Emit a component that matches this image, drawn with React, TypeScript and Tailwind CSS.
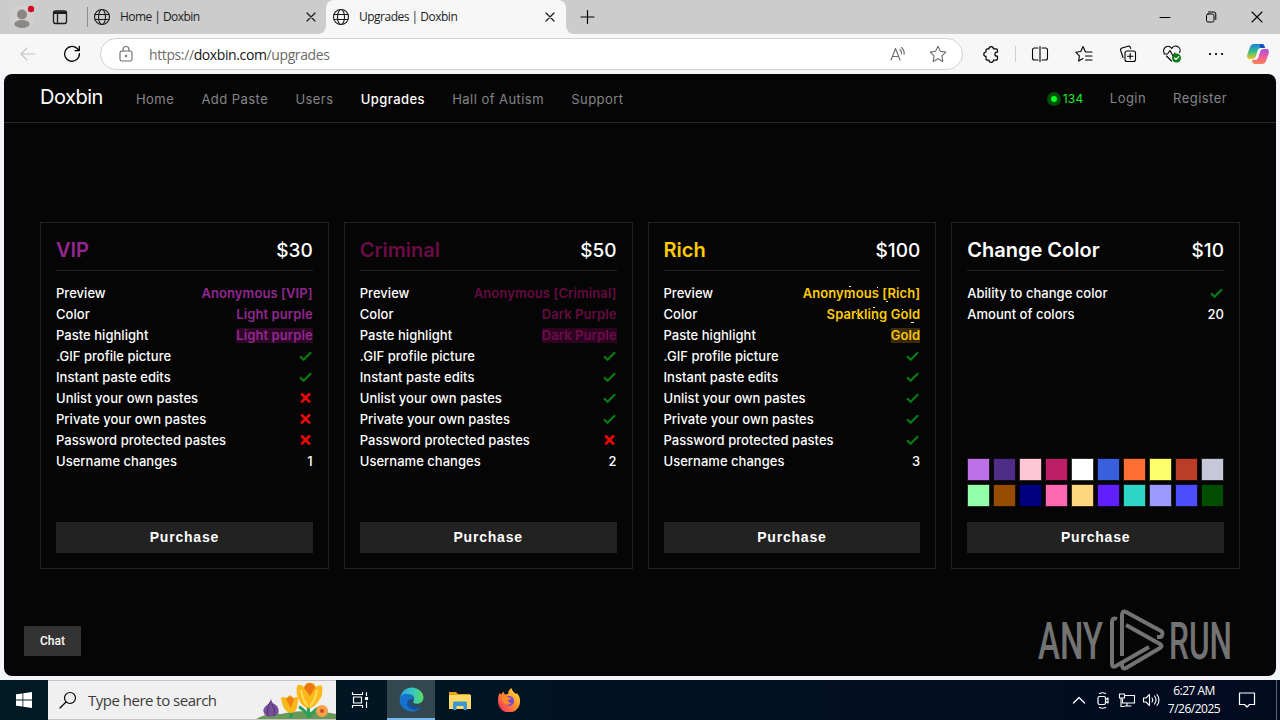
import React from 'react'

interface IconProps {
  className?: string
  children: React.ReactNode
  size?: number
  width?: number
}

interface Feature {
  label: string
  value: React.ReactNode
}

interface Plan {
  name: string
  nameClass: string
  price: string
  features: Feature[]
  swatches?: string[]
}

function Icon({ className = '', children, size = 20, width = 1.1 }: IconProps) {
  return (
    <svg
      className={`shrink-0 ${className}`}
      width={size}
      height={size}
      viewBox="0 0 20 20"
      fill="none"
      stroke="currentColor"
      strokeWidth={width}
      strokeLinecap="round"
      strokeLinejoin="round"
    >
      {children}
    </svg>
  )
}

function Globe({ className }: { className?: string }) {
  return (
    <Icon className={className}>
      <circle cx="10" cy="10" r="7.5" />
      <ellipse cx="10" cy="10" rx="3.5" ry="7.5" />
      <path d="M3 7.5h14M3 12.5h14" />
    </Icon>
  )
}

function Cross({ className }: { className?: string }) {
  return (
    <Icon className={className} width={1.2}>
      <path d="M6 6l8 8M14 6l-8 8" />
    </Icon>
  )
}

const yes = (
  <svg className="w-3.5 h-3.5 mb-0.5" viewBox="0 0 14 14" fill="none" stroke="#087d14" strokeWidth="2.2">
    <path d="M1 7.2l3.6 3.5L12.1 3.2" />
  </svg>
)

const no = (
  <svg className="w-3.5 h-3.5 mb-px" viewBox="0 0 14 14" fill="none" stroke="#ee0a0a" strokeWidth="2.6">
    <path d="M2.2 2.5l8.8 8.8M11 2.5l-8.8 8.8" />
  </svg>
)

function Sparkle({ children, dots }: { children: string; dots: string }) {
  return (
    <span className="relative text-[#ffcc00] font-semibold tracking-[0.1px]">
      {children}
      <svg className="absolute right-0 top-px w-[118px] h-6" viewBox="0 0 118 24" fill="none" stroke="#fff6c0" strokeWidth="1">
        <path d={dots} />
      </svg>
    </span>
  )
}

const plans: Plan[] = [
  {
    name: 'VIP',
    nameClass: 'text-[#93278f]',
    price: '$30',
    features: [
      { label: 'Preview', value: <span className="text-[#93278f] font-semibold tracking-[0.1px]">Anonymous [VIP]</span> },
      { label: 'Color', value: <span className="text-[#93278f] font-semibold tracking-[0.1px]">Light purple</span> },
      { label: 'Paste highlight', value: <span className="text-[#93278f] bg-[#2c0726] font-semibold tracking-[0.1px] leading-[15px]">Light purple</span> },
      { label: '.GIF profile picture', value: yes },
      { label: 'Instant paste edits', value: yes },
      { label: 'Unlist your own pastes', value: no },
      { label: 'Private your own pastes', value: no },
      { label: 'Password protected pastes', value: no },
      { label: 'Username changes', value: '1' },
    ],
  },
  {
    name: 'Criminal',
    nameClass: 'text-[#6b0c46]',
    price: '$50',
    features: [
      { label: 'Preview', value: <span className="text-[#650b42] font-semibold tracking-[0.1px]">Anonymous [Criminal]</span> },
      { label: 'Color', value: <span className="text-[#650b42] font-semibold tracking-[0.1px]">Dark Purple</span> },
      { label: 'Paste highlight', value: <span className="text-[#6c0d4c] bg-[#2c0420] font-semibold tracking-[0.1px] leading-[15px]">Dark Purple</span> },
      { label: '.GIF profile picture', value: yes },
      { label: 'Instant paste edits', value: yes },
      { label: 'Unlist your own pastes', value: yes },
      { label: 'Private your own pastes', value: yes },
      { label: 'Password protected pastes', value: no },
      { label: 'Username changes', value: '2' },
    ],
  },
  {
    name: 'Rich',
    nameClass: 'text-[#ffcc00]',
    price: '$100',
    features: [
      { label: 'Preview', value: <Sparkle dots="M47 1.5h2M75 2.5h1M29 6.5h1M46 12.5h2M84 16.5h2M20 10.5h1">Anonymous [Rich]</Sparkle> },
      { label: 'Color', value: <Sparkle dots="M71 1.5h2M100 3.5h1M54 7.5h1M57 12.5h1M72 13.5h1M109 16.5h3">Sparkling Gold</Sparkle> },
      { label: 'Paste highlight', value: <span className="text-[#f5c211] bg-[#3a2b04] font-semibold tracking-[0.1px] leading-[15px]">Gold</span> },
      { label: '.GIF profile picture', value: yes },
      { label: 'Instant paste edits', value: yes },
      { label: 'Unlist your own pastes', value: yes },
      { label: 'Private your own pastes', value: yes },
      { label: 'Password protected pastes', value: yes },
      { label: 'Username changes', value: '3' },
    ],
  },
  {
    name: 'Change Color',
    nameClass: 'text-white',
    price: '$10',
    features: [
      { label: 'Ability to change color', value: yes },
      { label: 'Amount of colors', value: '20' },
    ],
    swatches: [
      'bg-[#bd71e6]', 'bg-[#4f2d86]', 'bg-[#ffc6d6]', 'bg-[#bd1e68]', 'bg-white',
      'bg-[#3860dc]', 'bg-[#ff6e33]', 'bg-[#ffff6b]', 'bg-[#b93d28]', 'bg-[#c6c7d9]',
      'bg-[#94ffa8]', 'bg-[#964b00]', 'bg-[#000080]', 'bg-[#ff69b4]', 'bg-[#ffd680]',
      'bg-[#611fff]', 'bg-[#2fd6c5]', 'bg-[#9c99ff]', 'bg-[#4b4dff]', 'bg-[#004d00]',
    ],
  },
]

function PlanCard({ plan }: { plan: Plan }) {
  return (
    <div className="flex flex-col h-[347px] border border-[#222222] px-[15px] pb-[15px]">
      <div className="flex justify-between items-center h-12 pt-[7px] border-b border-[#222222]">
        <h2 className={`text-[20px] font-semibold ${plan.nameClass}`}>{plan.name}</h2>
        <span className="pt-0.5 text-[19px] font-medium">{plan.price}</span>
      </div>
      <div className="pt-3 text-[13px] font-medium tracking-[0.03px]">
        {plan.features.map((f) => (
          <div key={f.label} className="flex justify-between items-center h-[21px]">
            <span>{f.label}</span>
            {f.value}
          </div>
        ))}
      </div>
      <div className="mt-auto">
        {plan.swatches && (
          <div className="grid grid-cols-[repeat(10,23px)] gap-[3px] mb-[15px]">
            {plan.swatches.map((s) => (
              <div key={s} className={`h-[23px] border border-black/80 ${s}`} />
            ))}
          </div>
        )}
        <button className="block w-full h-[31px] bg-[#222222] text-[14px] font-bold tracking-[0.8px] font-['Liberation_Sans',sans-serif]">
          Purchase
        </button>
      </div>
    </div>
  )
}

function TabBar() {
  return (
    <div className="flex h-[34px] bg-linear-to-b from-[#cccccc] from-50% to-[#f7f7f7] to-50% text-[12px] text-[#1b1b1b]">
      <div className="flex items-center w-[87px] pl-2.5 bg-[#cccccc]">
        <svg className="w-[26px] h-[26px]" viewBox="0 0 26 26">
          <circle cx="12" cy="13" r="12" fill="#d2d0ce" />
          <circle cx="12" cy="10.5" r="5" fill="#8a8886" />
          <ellipse cx="12" cy="20" rx="7.7" ry="4" fill="#8a8886" />
          <circle cx="21" cy="5" r="3.2" fill="#d00d28" />
        </svg>
        <Icon className="ml-3.5" width={1.3}>
          <rect x="3.5" y="3.8" width="13" height="12.7" rx="2" />
          <path d="M4 5h12M4 6.3h12M7.5 7v9.5" />
        </Icon>
      </div>
      <div className="flex items-center flex-none w-[239px] rounded-br-lg bg-[#cccccc]">
        <div className="w-px h-5 bg-[#8c8c8c]" />
        <Globe className="ml-1" />
        <span className="ml-2 tracking-[-0.55px]">Home | Doxbin</span>
        <Cross className="ml-auto mr-[5px]" />
      </div>
      <div className="flex items-center flex-none w-60 rounded-t-lg bg-[#f7f7f7]">
        <Globe className="ml-[5px]" />
        <span className="ml-2 tracking-[-0.5px]">Upgrades | Doxbin</span>
        <Cross className="ml-auto mr-1.5" />
      </div>
      <div className="flex flex-1 items-center pl-3 pr-[13px] rounded-bl-lg bg-[#cccccc] text-black">
        <Icon width={1.2}>
          <path d="M9.5 3.5v13M3 10h13" />
        </Icon>
        <div className="flex items-center ml-auto gap-[26px]">
          <Icon width={1}><path d="M5 10.5h10" /></Icon>
          <Icon width={1}>
            <rect x="5.5" y="7" width="7.5" height="8" rx="1.5" />
            <path d="M7.5 5h5.3a2 2 0 0 1 2 2v5.5" />
          </Icon>
          <Icon width={1.1}><path d="M5 5l10 10M15 5l-10 10" /></Icon>
        </div>
      </div>
    </div>
  )
}

function Toolbar() {
  return (
    <div className="flex items-center h-10 bg-[#f7f7f7] text-[#1b1b1b]">
      <Icon className="ml-[18px] text-[#c4c4c4]"><path d="M17 10H3M9 4l-6 6 6 6" /></Icon>
      <Icon className="ml-6 text-black" width={1.3}>
        <path d="M17.4 9.7a7.4 7.4 0 1 1-2.5-5.4l2.3 2.2M17.3 2.5v4.2h-4.2" />
      </Icon>
      <div className="flex items-center w-[863px] h-8 ml-[18px] pl-[15px] pr-3.5 rounded-full bg-white border border-[#d2d2d2] text-[#6b6b6b]">
        <Icon>
          <rect x="4" y="7" width="12" height="10" rx="1.8" />
          <path d="M7 7V5.5a3 3 0 0 1 6 0V7" />
          <circle cx="10" cy="12" r=".6" fill="currentColor" />
        </Icon>
        <span className="ml-[13px] text-[14px] tracking-[-0.39px]">
          https://<span className="text-[#151515]">doxbin.com</span>/upgrades
        </span>
        <Icon className="ml-auto">
          <path d="M3 16L7.5 4.5 12 16M4.5 12.5h6M12 5.5q2 2 1.6 4.5M13.5 3.5q3.2 3 2.6 7" />
        </Icon>
        <Icon className="ml-5">
          <path d="M10 2.3l2.4 5 5.4.8-3.9 3.8.9 5.5L10 14.8l-4.8 2.6.9-5.5L2.2 8.1l5.4-.8z" />
        </Icon>
      </div>
      <div className="flex items-center flex-1 pl-[18px] text-black">
        <Icon className="mr-[14px]" width={1.2}>
          <path d="M8 4.800a2.200 2.200 0 0 1 4.400 0H15a1.500 1.500 0 0 1 1.500 1.500V8.200h-.6a2 2 0 0 0 0 4h.6v2.500A1.500 1.500 0 0 1 15 16.200h-2.600a2.200 2.200 0 0 1-4.400 0H6.500A1.500 1.500 0 0 1 5 14.700v-2.300a2.200 2.200 0 0 1 0-4.400V6.300a1.500 1.500 0 0 1 1.500-1.500z" />
        </Icon>
        <div className="w-px h-4 bg-[#cfcfcf]" />
        <div className="flex items-center gap-6 ml-[14px]">
          <Icon>
            <path d="M8 4H4.5a2 2 0 0 0-2 2v8a2 2 0 0 0 2 2H8M12 4h3.5a2 2 0 0 1 2 2v8a2 2 0 0 1-2 2H12M10 2.5v15" />
          </Icon>
          <Icon>
            <path d="M11.5 8L9 2.5 6.8 7.5l-5 .7 3.6 3.6-.8 5.2L9 14.5M11.5 8H18M11.5 12H18M11.5 16H18" />
          </Icon>
          <Icon>
            <rect x="7" y="7" width="10.5" height="10.5" rx="2" />
            <path d="M12.2 9.5v5.5M9.5 12.2h5.5M5 13.5L2.7 6.5a2 2 0 0 1 1.3-2.5l6-1.8a2 2 0 0 1 2.4 1.3l.3 1" />
          </Icon>
          <Icon>
            <path d="M2.2 9a4.2 4.2 0 0 1 7.6-4.5 4.2 4.2 0 0 1 7.8 4M2 10h3.5L8 6.5l3 5.5 2-3M4.5 12l5 5" />
            <circle cx="14.5" cy="14" r="4.5" fill="#0f7b18" stroke="none" />
            <path d="M12.5 14l1.5 1.5 2.8-2.8" stroke="white" />
          </Icon>
          <Icon>
            <path d="M4 10h.1M10 10h.1M16 10h.1" strokeWidth="2.2" />
          </Icon>
        </div>
        <svg className="w-6 h-6 ml-5" viewBox="0 0 24 24">
          <defs>
            <linearGradient id="cpA" x1="0" y1="0" x2="0" y2="1">
              <stop offset="0" stopColor="#1b7fe0" />
              <stop offset=".5" stopColor="#35bd8b" />
              <stop offset="1" stopColor="#f5c518" />
            </linearGradient>
            <linearGradient id="cpB" x1="0" y1="0" x2="0" y2="1">
              <stop offset="0" stopColor="#a552e6" />
              <stop offset=".5" stopColor="#ec5aa0" />
              <stop offset="1" stopColor="#fb8150" />
            </linearGradient>
          </defs>
          <path d="M8 2h7c2 0 2.5 1.5 3 4h-3c-2 0-3 1-3.5 3l-1.5 5c-.7 2-1.5 3-4 3H4c-2.5 0-3.5-2-2.5-5L4 5c.7-2 2-3 4-3z" fill="url(#cpA)" />
          <path d="M14 2h2c2 0 2.5 1.5 3 4h-5z" fill="#174fbd" />
          <path d="M16 22H9c-2 0-2.5-1.5-3-4h3c2 0 3-1 3.5-3L14 10c.7-2 1.5-3 4-3h2c2.5 0 3.5 2 2.5 5L20 19c-.7 2-2 3-4 3z" fill="url(#cpB)" />
        </svg>
      </div>
    </div>
  )
}

function Watermark() {
  return (
    <svg className="absolute left-[1030px] top-[532px] w-[204px] h-[66px] overflow-visible opacity-60" viewBox="0 0 204 66" fill="#bdbdbd">
      <g fontFamily="Roboto, sans-serif" fontSize="52" fontWeight="500">
        <text x="4" y="53" textLength="65" lengthAdjust="spacingAndGlyphs">ANY</text>
        <text x="135" y="53" textLength="63" lengthAdjust="spacingAndGlyphs">RUN</text>
      </g>
      <g fill="none" stroke="#bdbdbd" strokeWidth="4" strokeLinejoin="round">
        <path d="M83 13q-5-2-5 3v42q0 4 4 2l33-19" />
        <path d="M88 50V9q0-5 4-3l35 19q3 2 0 6h-4M92 19l34 19q3 2 0 4L92 62q-4 2-4-4" />
      </g>
    </svg>
  )
}

const links = ['Home', 'Add Paste', 'Users', 'Upgrades', 'Hall of Autism', 'Support']

function Site() {
  return (
    <div className="relative h-[602px] mx-1 rounded-lg overflow-hidden bg-[#050505] text-white font-['Inter',sans-serif]">
      <nav className="flex items-center h-[49px] pl-9 pr-[49px] pb-0.5 border-b border-[#2a2a2a] text-[13px] text-[#868686]">
        <span className="w-24 text-[20px] text-white tracking-[-0.5px]">Doxbin</span>
        <div className="flex gap-[27.2px] pt-[5px] tracking-[0.45px]">
          {links.map((l) => (
            <a key={l} className={l === 'Upgrades' ? 'text-white font-medium' : ''}>{l}</a>
          ))}
        </div>
        <div className="flex items-center ml-auto pt-[3px] tracking-[0.45px]">
          <span className="w-3.5 h-3.5 rounded-full bg-[#004d08] flex items-center justify-center">
            <span className="w-1.5 h-1.5 rounded-full bg-[#0bff24]" />
          </span>
          <span className="ml-0.5 mr-[26.5px] text-[12px] tracking-[0.2px] text-[#10ee28]">134</span>
          <a className="mr-[27px]">Login</a>
          <a>Register</a>
        </div>
      </nav>
      <main className="grid grid-cols-4 gap-[15px] px-9 pt-[99px]">
        {plans.map((plan) => (
          <PlanCard key={plan.name} plan={plan} />
        ))}
      </main>
      <button className="absolute left-5 top-[552px] w-[57px] h-[30px] bg-[#333333] text-[12px] font-medium font-['Roboto',sans-serif]">
        Chat
      </button>
      <Watermark />
    </div>
  )
}

function Flowers() {
  return (
    <svg className="ml-auto w-20 h-[38px]" viewBox="0 0 80 38">
      <path d="M0 38q10-6 25-5 15-4 28-2 14-1 27 2v5z" fill="#68985a" />
      <path d="M35 37V24M53 37l-1-14M53 36q6-8 10-9M52 34q-6-7-9-8" stroke="#2f9e55" strokeWidth="3" fill="none" />
      <path d="M15 17q0 5 5 7 4 4 2 9-7 5-13 1-4-6 2-10 4-3 4-7z" fill="#76509a" />
      <path d="M15 20q-5 7-3 15M16 23q4 5 2 12" stroke="#51326f" fill="none" />
      <path d="M25 17q2-2 5 0l4-3 4 3q3-2 4 0 0 15-7 15-8-1-10-15z" fill="#f9b719" />
      <path d="M30 18l4-3 4 3-3 9z" fill="#ee7f12" />
      <path d="M41 5q3-3 7 1 3-6 6-4 4-1 6 4 4-3 6-1 2 9-4 16-4 6-9 6-5 0-9-6-5-8-3-16z" fill="#fbb81c" />
      <path d="M48 7q2-5 6-5 4 1 5 5l-5 8z" fill="#ed7611" />
      <path d="M45 9q2 12 7 16M61 9q-2 11-7 16" stroke="#ffdc50" strokeWidth="2" fill="none" />
      <circle cx="66" cy="30" r="6" fill="#f6a14a" />
      <circle cx="66" cy="30" r="2" fill="#c94e1f" />
    </svg>
  )
}

function Taskbar() {
  return (
    <div className="flex items-center h-10 mt-1 bg-linear-to-r from-[#001a24] to-[#020a20] text-white">
      <div className="flex justify-center w-12">
        <svg className="w-4 h-4" viewBox="0 0 16 16" fill="white">
          <path d="M0 2.3L6.5 1.4v6.2H0zM7.3 1.3L16 0v7.6H7.3zM0 8.4h6.5v6.2L0 13.7zM7.3 8.4H16V16l-8.7-1.3z" />
        </svg>
      </div>
      <div className="flex items-center w-72 h-10 pl-2.5 bg-[#f0f0f0] border-y border-[#c4c4c4] text-[#3b3b3b]">
        <Icon className="text-black" width={1.2}>
          <circle cx="12" cy="8" r="5.5" />
          <path d="M8 12l-6 6" />
        </Icon>
        <span className="ml-2.5 text-[15px] whitespace-nowrap tracking-[-0.5px]">Type here to search</span>
        <Flowers />
      </div>
      <div className="flex justify-center w-[51px] pr-[3px]">
        <Icon width={1.2}>
          <path d="M2.5 2.5v2h10v-2M2.5 17.5v-2h10v2M3.5 7h8v6h-8zM16.5 2.5v3M16.5 12v5.5" />
          <rect x="15.5" y="7.5" width="2" height="2" fill="white" />
        </Icon>
      </div>
      <div className="flex items-center justify-center w-12 h-10 bg-[#33474f] border-b-2 border-[#76b9ed]">
        <svg className="w-[25px] h-[25px]" viewBox="0 0 24 24">
          <defs>
            <linearGradient id="edA" x1="0" y1="0" x2="1" y2="0">
              <stop offset="0" stopColor="#2ba8df" />
              <stop offset=".6" stopColor="#38c9b7" />
              <stop offset="1" stopColor="#5fdb5d" />
            </linearGradient>
          </defs>
          <path d="M1 11C2 4 7 .5 12 .5c7 0 11.5 5 11.5 9.5 0 4-3 6-6.5 6-3 0-4-1-3-2.5 2-4-2-7-6-6C4 8 1.5 9.5 1 11z" fill="url(#edA)" />
          <path d="M.6 12C1 8 5 6 9 7c3.5.5 5.5 3 5 6-1-2-4-2-5.5.5-2 4 1.5 8 6 8 3 0 5-1 7-3-2 4-6 5.5-10 5C5 23 .6 18 .6 12z" fill="#1572cf" />
          <path d="M8.5 13.5c-2 4 1.5 8 6 8 3 0 5-1 7-3-3 1-6 .5-8.5-1-2-1.3-2-3-1.5-4.5-1-.5-2.3 0-3 .5z" fill="#124f96" />
        </svg>
      </div>
      <div className="flex justify-center w-[49px]">
        <svg className="w-[22px] h-[19px]" viewBox="0 0 22 19">
          <path d="M0 1h7l2 2h12v14H0z" fill="#e9a21b" />
          <path d="M0 4h22v14H0z" fill="#ffd868" />
          <path d="M4 19v-7q0-1.5 1.5-1.5h11Q18 10.5 18 12v7h-3.5v-4h-7v4z" fill="#3d96d2" />
        </svg>
      </div>
      <div className="flex justify-center w-[49px]">
        <svg className="w-6 h-6" viewBox="0 0 24 24">
          <defs>
            <linearGradient id="ffA" x1="1" y1="0" x2="0" y2="1">
              <stop offset="0" stopColor="#fff04a" />
              <stop offset=".45" stopColor="#ff9328" />
              <stop offset="1" stopColor="#f5206a" />
            </linearGradient>
          </defs>
          <path d="M2.5 5l2 1.5L6 3.5l2 3 3-.5q0-4 3.500-6 1 4 5 6l.5-1q3.500 4 3 9A11 11 0 0 1 1 13q0-5 1.500-8z" fill="url(#ffA)" />
          <circle cx="12" cy="13" r="5" fill="#7546dc" />
          <path d="M4.5 9q4-2 7 .5l3 .5q-1 2-3.5 2 0 3 3.5 3-5 4-8-.5z" fill="#ff8a24" />
        </svg>
      </div>
      <div className="flex items-center ml-auto gap-1">
        <Icon width={1.3}><path d="M4.5 13l5.5-5.5 5.5 5.5" /></Icon>
        <Icon width={1.2}>
          <rect x="5" y="6.5" width="7.5" height="8" rx="1.5" />
          <path d="M12.5 9.5l2.500-1.500v5l-2.500-1.500M6.500 3.500q3-1.500 6 0M6.500 17.500q3 1.500 6 0" />
        </Icon>
        <Icon>
          <path d="M7.5 5.5h10v7.5H5.5V9M10 13v3M8 16h6M2.500 4h5v4h-5zM4 8v8.500M4 16.500h3" />
        </Icon>
        <Icon>
          <path d="M2.5 8h2.500l3.500-3.500v11L5 12H2.500zM11 8q1.500 2 0 4M13.500 6q3 4 0 8M16 4.500q4 5.500 0 11" />
        </Icon>
      </div>
      <div className="w-[66px] text-center text-[12px] leading-[18px] tracking-[-0.5px] whitespace-nowrap">
        <div>6:27 AM</div>
        <div>7/26/2025</div>
      </div>
      <Icon className="ml-[10px] mr-[19px]" width={1.2}>
        <path d="M2.5 3h15v11.5h-5L10 17l-2.5-2.5h-5z" />
      </Icon>
      <div className="w-1 h-10 border-l border-[#5a6472]" />
    </div>
  )
}

export default function App() {
  return (
    <div className="w-[1280px] h-[720px] overflow-hidden bg-[#f2f4f8] font-['Open_Sans',sans-serif]">
      <TabBar />
      <Toolbar />
      <Site />
      <Taskbar />
    </div>
  )
}
